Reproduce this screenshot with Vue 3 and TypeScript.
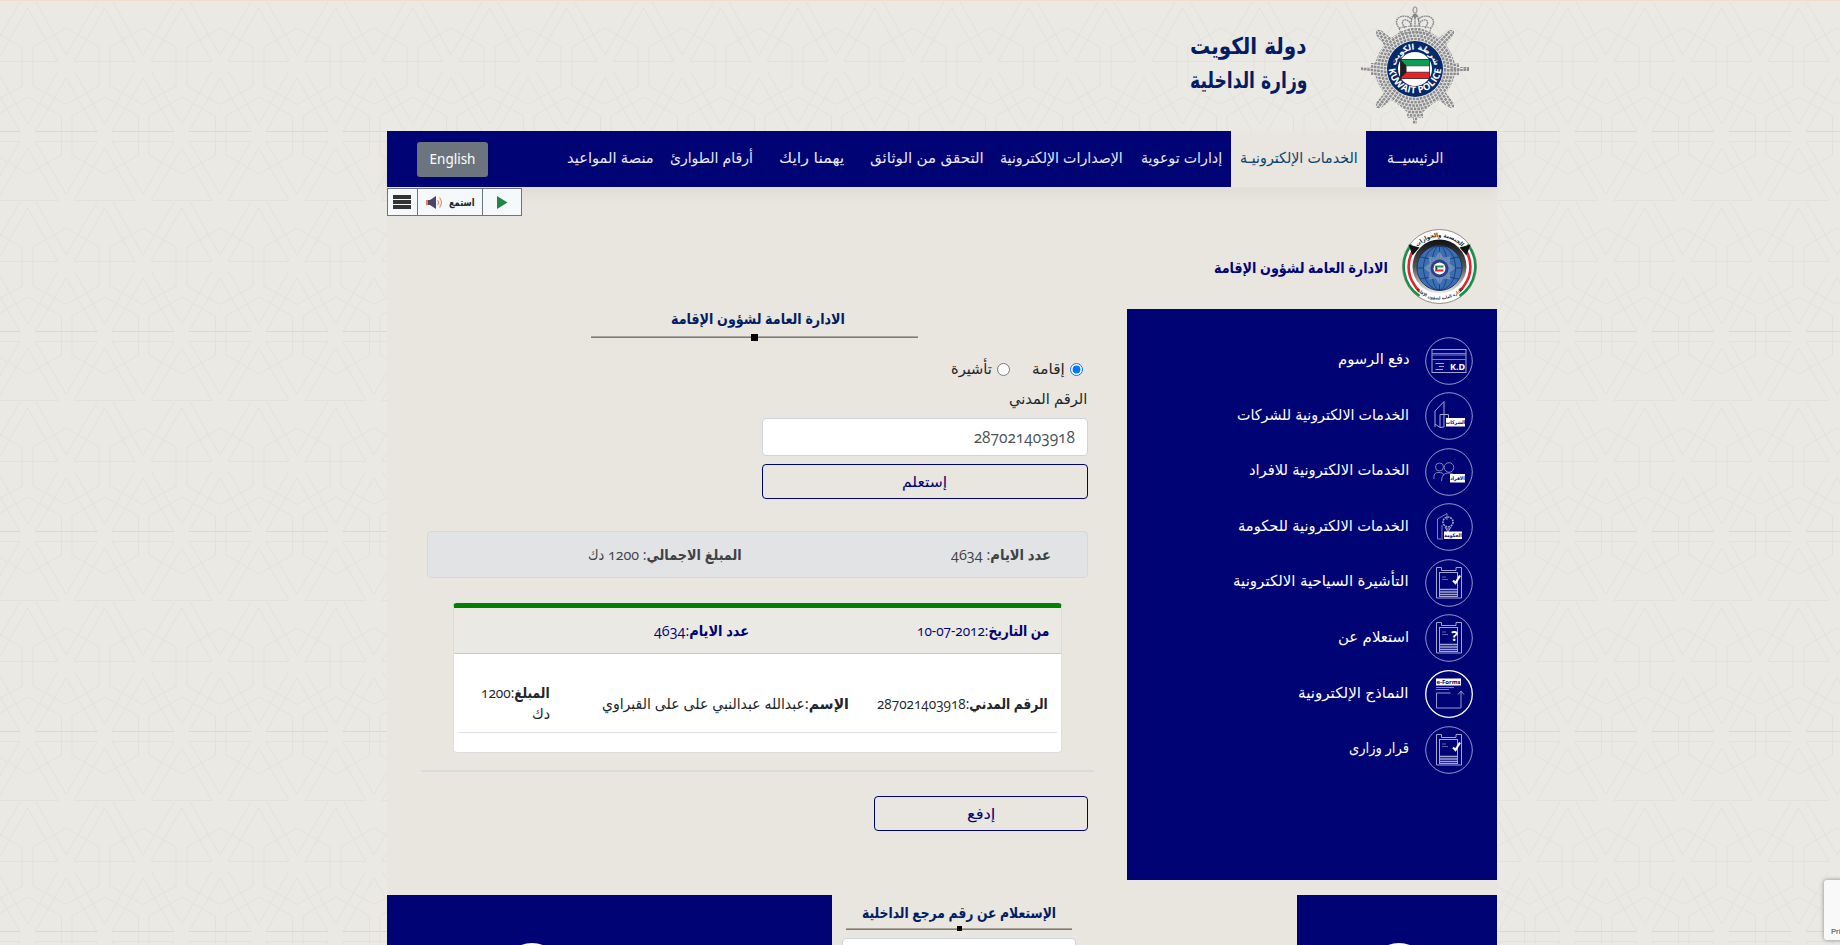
<script setup lang="ts">
import { defineComponent, h, onMounted, ref } from 'vue'

// Keeps an Arabic label at a fixed advance width whatever the fallback font is.
const Fit = defineComponent({
  props: { w: { type: Number, required: true } },
  setup(props, { slots }) {
    const inner = ref<HTMLElement | null>(null)
    const scale = ref(1)
    onMounted(() => {
      const natural = inner.value?.offsetWidth ?? 0
      if (natural > 0) scale.value = props.w / natural
    })
    return () =>
      h('span', { class: 'fit', style: { width: props.w + 'px' } }, [
        h('span', { ref: inner, class: 'fit-inner', style: { transform: `scaleX(${scale.value})` } }, slots.default?.()),
      ])
  },
})

interface NavItem { label: string; w: number; cls: string }
const nav: NavItem[] = [
  { label: 'الرئيسيــة', w: 56, cls: 'home' },
  { label: 'الخدمات الإلكترونيـة', w: 118, cls: 'active' },
  { label: 'إدارات توعوية', w: 81, cls: 'n1' },
  { label: 'الإصدارات الإلكترونية', w: 123, cls: 'n2' },
  { label: 'التحقق من الوثائق', w: 114, cls: 'n3' },
  { label: 'يهمنا رايك', w: 65, cls: 'n4' },
  { label: 'أرقام الطوارئ', w: 83, cls: 'n5' },
  { label: 'منصة المواعيد', w: 87, cls: 'n6' },
]

interface SideItem { label: string; w: number; icon: string }
const side: SideItem[] = [
  { label: 'دفع الرسوم', w: 72, icon: 'card' },
  { label: 'الخدمات الالكترونية للشركات', w: 172, icon: 'company' },
  { label: 'الخدمات الالكترونية للافراد', w: 160, icon: 'people' },
  { label: 'الخدمات الالكترونية للحكومة', w: 171, icon: 'gov' },
  { label: 'التأشيرة السياحية الالكترونية', w: 176, icon: 'check' },
  { label: 'استعلام عن', w: 71, icon: 'ask' },
  { label: 'النماذج الإلكترونية', w: 111, icon: 'forms' },
  { label: 'قرار وزارى', w: 60, icon: 'check' },
]

const kind = ref('iqama')
const civilId = ref('287021403918')
const rings = [30, 33.3, 36.6, 39.9, 43.2, 46.5, 49.8, 53.1]
</script>

<template>
  <div class="page" dir="rtl">
    <svg class="lattice" width="1840" height="945" aria-hidden="true">
      <defs>
        <pattern id="lat" width="77" height="200" patternUnits="userSpaceOnUse" y="0">
          <g fill="none" stroke="#e2e1dc" stroke-width="1">
            <g v-for="dx in [-77, 0, 77]" :key="dx" :transform="`translate(${dx} 0)`">
              <path d="M36 0L66 53L97 0M-3 59.5L27.7 6L58 59.5ZM66 26L99 45V84L66 102.5L33 84V45Z" />
              <path d="M-3 69L27.7 122L58 69M35 129.5L66 76L97 129.5M28 95L61.6 114V153L28 172L-5 153V114Z" />
              <path d="M35 129.5H97" stroke="#dad9d4" />
              <path d="M35 139.5H97L66 192ZM-3 198.5L27.7 146L58 198.5Z" />
            </g>
          </g>
        </pattern>
      </defs>
      <g transform="translate(0 1)"><rect width="1840" height="944" fill="url(#lat)" /></g>
    </svg>

    <div class="shell">
      <header class="top">
        <svg class="crest" width="108" height="120" viewBox="-54 -64 108 120">
          <defs>
            <clipPath id="star">
              <path d="M-54 -2H-44V-6H-40L-36 -16L-31 -24L-39 -34V-39H-34L-24 -31L-15 -37L-5 -41H5L15 -37L24 -31L34 -39H39V-34L31 -24L36 -16L40 -6H44V-2H54V2H44V6H40L36 16L31 24L39 34V39H34L24 31L16 36L8 43V49H2V55H-2V49H-8V43L-16 36L-24 31L-34 39H-39V34L-31 24L-36 16L-40 6H-44V2H-54Z" />
            </clipPath>
            <path id="arcTop" d="M-19.5 0A19.5 19.5 0 0 1 19.5 0" />
            <path id="arcBot" d="M-26.3 -2A26.3 26.3 0 0 0 26.3 -2" />
          </defs>
          <g clip-path="url(#star)" fill="none" stroke="#8b8d90" stroke-width="2.6">
            <circle v-for="r in rings" :key="r" :r="r" stroke-dasharray="2.6 1" />
          </g>
          <g fill="none" stroke="#85878a" stroke-width="1">
            <path d="M-14 -35Q0 -39 14 -35L16 -41Q0 -45 -16 -41Z" stroke-dasharray="2 .8" />
            <path d="M-15 -40C-26 -52 -8 -57 -3 -49M15 -40C26 -52 8 -57 3 -49M-10 -41C-18 -51 -5 -52 -4 -43M10 -41C18 -51 5 -52 4 -43M-4 -42Q-4 -54 0 -55Q4 -54 4 -42M0 -42V-54" stroke-width="1.4" stroke-dasharray="1.8 .6" />
            <ellipse cy="-59" rx="2" ry="3.2" />
            <circle cy="-53" r="1.6" fill="#85878a" />
          </g>
          <circle r="28" fill="#05296b" />
          <circle r="17" fill="#fff" />
          <rect x="-14.5" y="-9.5" width="29" height="6.3" fill="#0b9f55" />
          <rect x="-14.5" y="-3.2" width="29" height="6.4" fill="#fff" />
          <rect x="-14.5" y="3.2" width="29" height="6.3" fill="#ec2227" />
          <path d="M-14.5 -9.5L-8.5 -3.2V3.2L-14.5 9.5Z" fill="#231f20" />
          <rect x="-14.5" y="-9.5" width="29" height="19" fill="none" stroke="#231f20" stroke-width=".8" />
          <path d="M-8.5 -3.2H14M-8.5 3.2H14" stroke="#231f20" stroke-width=".7" />
          <text class="crest-ar" text-anchor="middle"><textPath href="#arcTop" startOffset="50%">شرطة الكويت</textPath></text>
          <text class="crest-en" direction="ltr" text-anchor="middle"><textPath href="#arcBot" startOffset="50%" textLength="78">KUWAIT POLICE</textPath></text>
        </svg>
        <div class="ministry">
          <Fit :w="117">دولة الكويت</Fit>
          <Fit :w="117">وزارة الداخلية</Fit>
        </div>
      </header>

      <nav class="nav">
        <a v-for="n in nav" :key="n.label" :class="['nav-item', n.cls]"><Fit :w="n.w">{{ n.label }}</Fit></a>
        <button class="lang" dir="ltr">English</button>
      </nav>

      <main class="content">
        <div class="listen" dir="ltr">
          <span class="cell menu"><i></i><i></i><i></i></span>
          <span class="cell say">
            <svg width="18" height="15" viewBox="0 0 18 15">
              <path d="M0 5H4L10 1V14L4 10H0Z" fill="#484766" />
              <path d="M0 5H2V10H0Z" fill="#ef7d63" />
              <path d="M11.5 5Q13.5 7.5 11.5 10M13.5 2.5Q17.5 7.5 13.5 12.5" fill="none" stroke="#f18a68" stroke-width="1.2" />
            </svg>
            <span dir="rtl"><Fit :w="26">استمع</Fit></span>
          </span>
          <span class="cell"><svg width="12" height="13" viewBox="0 0 12 13"><path d="M1 0L11.5 6.5L1 13Z" fill="#23854a" /></svg></span>
        </div>

        <div class="columns">
          <aside class="side">
            <div class="dept">
              <svg width="75" height="75" viewBox="-37.5 -37.5 75 75">
                <defs>
                  <linearGradient id="ringShade" x1="0" x2="0" y1="0" y2="1">
                    <stop offset="0" stop-color="#111" /><stop offset=".5" stop-color="#555" /><stop offset="1" stop-color="#eee" />
                  </linearGradient>
                  <path id="eTop" d="M-29.5 0A29.5 29.5 0 0 1 29.5 0" />
                  <path id="eBot" d="M-33 0A33 33 0 0 0 33 0" />
                </defs>
                <circle r="37" fill="#fff" stroke="#77736d" stroke-width=".8" />
                <path d="M-28 -22A35.5 35.5 0 0 0 -20 29.500M28 -22A35.5 35.5 0 0 1 20 29.5" fill="none" stroke="#15904b" stroke-width="2.4" />
                <path d="M-25 -18A31 31 0 0 0 -25 18.500Q-24 21 -20 24.500M25 -18A31 31 0 0 1 25 18.500Q24 21 20 24.500" fill="none" stroke="#e0262c" stroke-width="2.6" />
                <path d="M-31 -22L-20 -19L-27 -11ZM31 -22L20 -19L27 -11Z" fill="#111" />
                <circle r="27" fill="url(#ringShade)" />
                <circle r="22.500" cy="1.500" fill="#3b6fb5" stroke="#15284e" stroke-width=".8" />
                <g transform="translate(0 1.5)" fill="none" stroke="#183569" stroke-width=".8">
                  <ellipse rx="8" ry="22" /><ellipse rx="16" ry="22" />
                  <path d="M0 -22V22M-22 0H22M-19 -11Q0 -6 19 -11M-19 11Q0 6 19 11" />
                </g>
                <path d="M0 -15L4 -9L11 -10L10 -3L16 1.500L10 6L11 13L4 12L0 18L-4 12L-11 13L-10 6L-16 1.500L-10 -3L-11 -10L-4 -9Z" fill="#7f98ba" opacity=".75" />
                <circle r="9" cy="2" fill="#28408f" /><circle r="6" cy="2" fill="#fff" />
                <path d="M-4 -1H4V1H-4Z" fill="#119a50" /><path d="M-4 3H4V5H-4Z" fill="#e2272c" /><path d="M-4 -1L-2 2L-4 5Z" fill="#222" />
                <text class="em1" text-anchor="middle"><textPath href="#eTop" startOffset="50%">الجنسية والجوازات</textPath></text>
                <text class="em2" text-anchor="middle"><textPath href="#eBot" startOffset="50%">الادارة العامة لشؤون الإقامة</textPath></text>
              </svg>
              <b><Fit :w="174">الادارة العامة لشؤون الإقامة</Fit></b>
            </div>
            <ul class="menu-list">
              <li v-for="s in side" :key="s.label">
                <svg width="48" height="48" viewBox="0 0 48 48" fill="none" stroke="#a3a5d2" stroke-width="1">
                  <circle cx="24" cy="24" r="23.3" :stroke="s.icon === 'forms' ? '#fff' : '#9496c8'" :stroke-width="s.icon === 'forms' ? 1.3 : 1" />
                  <g v-if="s.icon === 'card'">
                    <rect x="7" y="12.5" width="34" height="23" />
                    <path d="M7 16.5H41M7 18H41M7 22.5H41" stroke="#7e80bd" />
                    <path d="M10.5 26.500H19M14 29.500H19M10.500 32.500H18" />
                    <text class="kd" x="25" y="33" direction="ltr">K.D</text>
                  </g>
                  <g v-else-if="s.icon === 'company'">
                    <path d="M10 35V19L19 9.500V35L15 35.500L10 32M15 35V22.500H23.500V27" />
                    <rect x="21" y="26" width="19" height="8.5" fill="#fff" stroke="none" />
                    <text class="tag" x="30.5" y="32">الشركات</text>
                  </g>
                  <g v-else-if="s.icon === 'people'" stroke="#7e80bd">
                    <circle cx="14.5" cy="19" r="4" /><circle cx="24" cy="19.5" r="4.8" />
                    <path d="M9 31Q8 24 14 24.500Q18 24 19 27M16.500 33Q17 25 23 25Q29 24.500 31 30" />
                    <rect x="25" y="26" width="15" height="8.5" fill="#fff" stroke="none" />
                    <text class="tag" x="32.5" y="32">الافراد</text>
                  </g>
                  <g v-else-if="s.icon === 'gov'" stroke="#7e80bd">
                    <path d="M18 36H12.500V16L22 10.500V17M17 35V22" />
                    <circle cx="23" cy="19" r="5" stroke-width="1.6" stroke-dasharray="2 .8" stroke="#a3a5d2" />
                    <path d="M20 24L23 29L26 24M21 26H25" stroke="#a3a5d2" />
                    <rect x="19" y="28.5" width="18" height="7.5" fill="#fff" stroke="none" />
                    <text class="tag" x="28" y="34">الحكومة</text>
                  </g>
                  <g v-else-if="s.icon === 'forms'">
                    <rect x="11" y="8.5" width="25" height="7" fill="#fff" stroke="none" />
                    <text class="ef" x="23.5" y="14" direction="ltr" text-anchor="middle">e-Forms</text>
                    <path d="M11 17.500H29M11 19.500H24" stroke="#7e80bd" />
                    <path d="M25.500 23H11.500V38H36V22M33 24.500L36 21L39 24.500" stroke="#9698ca" />
                  </g>
                  <g v-else>
                    <path d="M11.500 8.500H16.500V11.500H31V8.500H36.500V39H11.500Z" />
                    <rect x="14.5" y="13.5" width="18" height="24" />
                    <path d="M14.500 30.500H32.500M14.500 33H32.500M14.500 35.500H32.500" stroke-width="1.3" />
                    <path d="M17 18H21M17 20.500H23" stroke="#5d60a8" />
                    <path v-if="s.icon === 'check'" d="M28 21.500L30.500 24L35 16.500" stroke="#fff" stroke-width="2.2" />
                    <text v-else class="q" x="29.5" y="27" direction="ltr" text-anchor="middle">?</text>
                  </g>
                </svg>
                <Fit :w="s.w">{{ s.label }}</Fit>
              </li>
            </ul>
          </aside>

          <section class="main">
            <h5 class="title"><Fit :w="174">الادارة العامة لشؤون الإقامة</Fit></h5>
            <div class="rule"><i></i></div>
            <div class="radios">
              <label><input v-model="kind" type="radio" name="kind" value="iqama" /><Fit :w="33">إقامة</Fit></label>
              <label><input v-model="kind" type="radio" name="kind" value="visa" /><Fit :w="41">تأشيرة</Fit></label>
            </div>
            <div class="label"><Fit :w="78">الرقم المدني</Fit></div>
            <input v-model="civilId" class="field" type="text" />
            <button class="outline query"><Fit :w="45">إستعلم</Fit></button>

            <div class="alert">
              <Fit :w="100"><b>عدد الايام</b>: 4634</Fit>
              <Fit :w="154"><b>المبلغ الاجمالي</b>: 1200 دك</Fit>
            </div>

            <div class="card">
              <div class="card-head">
                <Fit :w="132"><b>من التاريخ</b>:<bdi>10-07-2012</bdi></Fit>
                <Fit :w="95"><b>عدد الايام</b>:4634</Fit>
              </div>
              <div class="card-row">
                <Fit :w="171"><b>الرقم المدني</b>:287021403918</Fit>
                <Fit :w="247"><b>الإسم</b>:عبدالله عبدالنبي على على القبراوي</Fit>
                <div class="amount"><Fit :w="69"><b>المبلغ</b>:1200</Fit><Fit :w="18">دك</Fit></div>
              </div>
            </div>
            <div class="divider"></div>
            <button class="outline pay"><Fit :w="28">إدفع</Fit></button>
          </section>
        </div>

        <div class="lower">
          <div class="box right"><i class="dome"></i></div>
          <div class="ref-box">
            <h5><Fit :w="194">الإستعلام عن رقم مرجع الداخلية</Fit></h5>
            <div class="rule small"><i></i></div>
            <div class="ref-input"></div>
          </div>
          <div class="box left"><i class="dome"></i></div>
        </div>
      </main>
    </div>
    <div class="privacy" dir="ltr">Privacy</div>
  </div>
</template>

<style>
body { margin: 0; overflow: hidden; }
.fit { display: inline-block; white-space: nowrap; direction: rtl; text-align: right; flex: none; }
.fit-inner { display: inline-block; transform-origin: 100% 50%; }
</style>

<style scoped>
* { box-sizing: border-box; }
.page {
  position: relative; width: 1840px; height: 945px; overflow: hidden;
  background: #ebe9e4; border-top: 1px solid #f2dccd;
  font: 15px/24px "Open Sans", "DejaVu Sans Condensed", "DejaVu Sans", sans-serif;
  font-variant-numeric: oldstyle-nums; color: #212529;
}
.lattice { position: absolute; inset: 0; }
.shell { position: relative; width: 1110px; margin-left: 343px; margin-right: 343px; }
.top { height: 130px; display: flex; padding-right: 28px; }
.crest { margin-top: 4px; flex: none; }
.crest-ar { font: bold 8px "DejaVu Sans", sans-serif; fill: #fff; }
.crest-en { font: bold 9.5px "Open Sans", sans-serif; fill: #fff; }
.ministry {
  display: flex; flex-direction: column; margin: 28px 54px 0 0; height: 70px;
  font: bold 23px/34px "DejaVu Sans Condensed", "DejaVu Sans", sans-serif; color: #021d63;
}
.nav {
  height: 56px; background: #000374; display: flex; align-items: center; color: #e9e9f4;
  position: relative; box-shadow: 0 1px 0 #dfe1e8, 0 8px 16px rgba(0, 0, 0, .04);
}
.nav-item { height: 56px; line-height: 52px; display: block; flex: none; }
.home { margin-right: 54px; }
.active { margin-right: 21px; width: 135px; padding-right: 8px; background: #e8e6de; color: #0b4373; }
.n1 { margin-right: 9px; }
.n2 { margin-right: 18px; }
.n3 { margin-right: 16px; }
.n4 { margin-right: 26px; }
.n5 { margin-right: 26px; }
.n6 { margin-right: 16px; }
.lang {
  width: 71px; height: 35px; margin: 0 auto 0 30px; padding: 0; border: 0; border-radius: 3px;
  background: #6c757d; color: #fff; font: 13.5px/33px "Noto Sans", sans-serif;
}
.content { height: 758px; background: #e8e6de; padding-top: 1px; overflow: hidden; }
.listen {
  position: relative; display: flex; width: 135px; height: 28px; margin-right: auto; background: #f5f9fc;
  border: 1px solid #6c757d; font-size: 11px; font-weight: bold;
}
.cell { display: flex; align-items: center; justify-content: center; width: 38px; }
.menu { width: 29px; flex-direction: column; gap: 1px; }
.menu i { width: 18px; height: 4px; background: #333; }
.say { width: 67px; gap: 5px; border: solid #6c757d; border-width: 0 1px; }
.columns { display: flex; height: 679px; }
.side { width: 370px; flex: none; padding-top: 12px; }
.dept { height: 81px; padding: 0 20px 4px 0; display: flex; gap: 14px; align-items: center; color: #00037a; }
.em1 { font: bold 6px "DejaVu Sans Condensed", sans-serif; fill: #222; }
.em2 { font: bold 4.2px "DejaVu Sans Condensed", sans-serif; fill: #333; }
.menu-list { list-style: none; margin: 0; padding: 24px 24px 0 0; height: 571px; background: #000374; color: #fff; }
.menu-list li { height: 55.6px; display: flex; align-items: flex-start; gap: 16px; line-height: 51px; }
.menu-list svg { margin-top: 3.5px; flex: none; }
.kd { font: bold 9px "Noto Sans", sans-serif; fill: #fff; stroke: none; }
.tag { font: bold 5px "DejaVu Sans Condensed", sans-serif; fill: #000374; stroke: none; text-anchor: middle; }
.ef { font: bold 6px "Open Sans", sans-serif; fill: #000374; stroke: none; }
.q { font: bold 14px "Open Sans", sans-serif; fill: #fff; stroke: none; }
.main { width: 740px; padding: 88px 34px 0; display: flex; flex-direction: column; align-items: flex-start; }
.title { margin: 0 0 0 1px; align-self: center; font-size: 15px; line-height: 28px; color: #021d63; }
.rule { width: 327px; height: 8px; margin: 1px 3px 0 0; align-self: center; position: relative; left: -1px; display: flex; justify-content: center; align-items: center; background: linear-gradient(#aaa59f 50%, #7d7974 50%) center / 100% 2px no-repeat; }
.rule i { width: 7px; height: 7px; background: #000; }
.radios { display: flex; margin: 15px 10px 0 0; height: 26px; gap: 22px; }
.radios label { display: flex; align-items: center; gap: 5px; }
.radios label :deep(.fit) { margin-top: -3px; }
.radios input { margin: 0; width: 13px; height: 13px; }
.label { margin: 4px 6px 0 0; height: 24px; }
.field {
  margin: 8px 5px 0 0; width: 326px; height: 38px; padding: 0 12px; border: 1px solid #ced4da; border-radius: 4px;
  background: #fff; font: 15.5px "Open Sans", sans-serif; font-variant-numeric: oldstyle-nums; color: #495057; outline: 0;
}
.outline { border: 1px solid #000374; border-radius: 4px; background: transparent; color: #000374; padding: 0; font: inherit; height: 35px; line-height: 31px; }
.query { width: 326px; margin: 8px 5px 0 0; }
.alert {
  width: 661px; height: 47px; margin: 32px 5px 0 0; padding-right: 36px; display: flex; gap: 209px;
  background: #e2e3e5; border: 1px solid #d6d8db; border-radius: 4px; color: #3f4245; line-height: 44px;
}
.card { width: 609px; height: 150px; margin: 25px 31px 0 0; background: #fff; border: 1px solid #dedddb; border-top: 5px solid #008000; border-radius: 4px; }
.card-head { height: 46px; padding-right: 12px; display: flex; gap: 168px; line-height: 44px; background: #ebe9e4; border-bottom: 1px solid #cbc9c5; color: #00036f; }
.card-row { height: 79px; margin: 0 4px; padding: 24px 9px 0 0; display: flex; line-height: 50px; border-bottom: 1px solid #dee2e6; }
.card-row > :nth-child(2) { margin-right: 28px; }
.amount { margin: 4px 52px 0 0; display: flex; flex-direction: column; line-height: 21px; height: 46px; }
.divider { width: 673px; height: 2px; margin: 17px -1px 0 0; background: #d8dbe1; }
.pay { width: 214px; margin: 24px 5px 0 0; }
.lower { display: flex; height: 60px; }
.box { background: #000374; display: flex; justify-content: center; flex: none; }
.right { width: 200px; }
.left { width: 445px; margin-right: auto; }
.dome { width: 60px; height: 60px; margin-top: 48px; border-radius: 50%; background: #fff; flex: none; }
.left .dome { margin-right: 155px; }
.right .dome { margin-left: 4px; }
.ref-box { width: 234px; margin-right: 221px; display: flex; flex-direction: column; align-items: center; }
.ref-box h5 { margin: 4px 0 0; font-size: 15px; line-height: 26px; color: #021d63; height: 26px; }
.small { width: 226px; margin: 1px 0 0; left: 0; }
.small i { width: 5px; height: 5px; }
.ref-input { width: 234px; height: 38px; margin-top: 7px; background: #fff; border: 1px solid #ced4da; border-radius: 4px; flex: none; }
.privacy {
  position: absolute; left: 1824px; top: 879px; width: 256px; height: 60px; padding: 45px 0 0 7px; background: #f9f9f9;
  border-radius: 3px; box-shadow: 0 0 4px #888; font: 8px/14px Roboto, sans-serif; color: #444;
}
</style>
